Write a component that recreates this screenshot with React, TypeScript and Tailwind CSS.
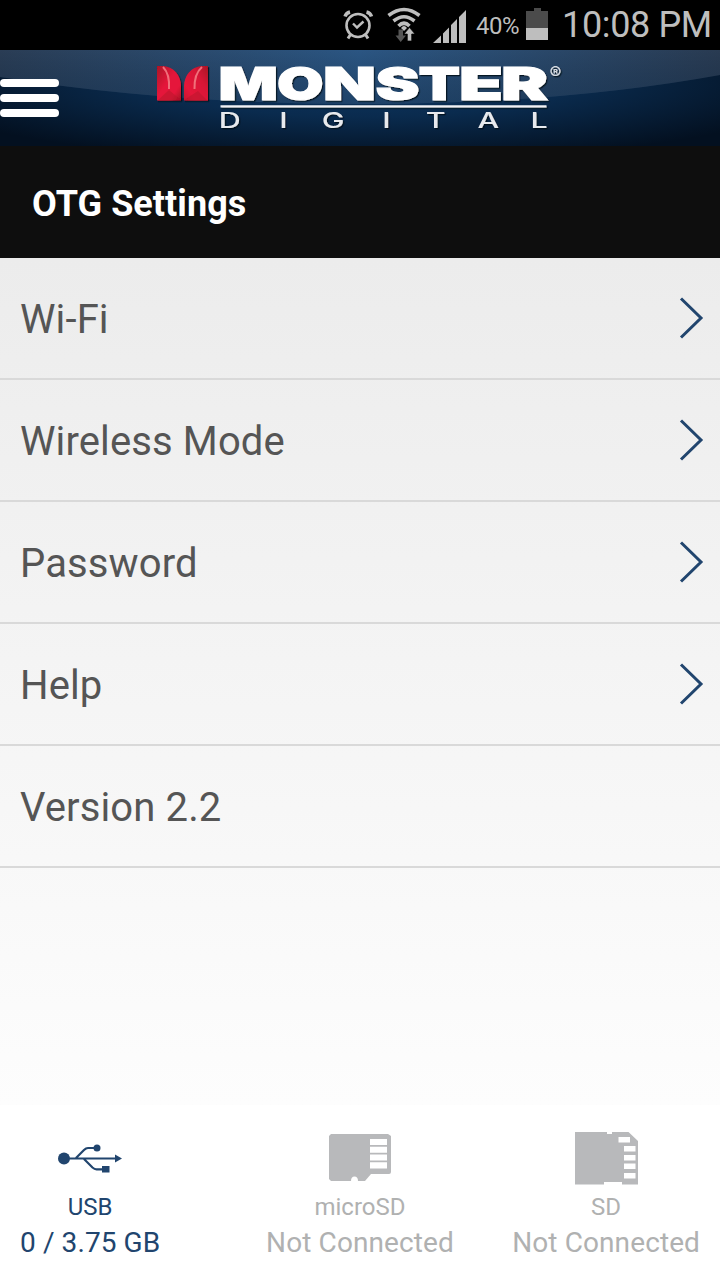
import type { ReactNode } from "react";

const menuItems = [
  { label: "Wi-Fi", hasDetail: true },
  { label: "Wireless Mode", hasDetail: true },
  { label: "Password", hasDetail: true },
  { label: "Help", hasDetail: true },
  { label: "Version 2.2", hasDetail: false },
];

// left edge and advance width of each letter in the wordmark
const wordmark = [
  { letter: "M", x: 218.5, width: 59.5 },
  { letter: "O", x: 277, width: 46.5 },
  { letter: "N", x: 323, width: 53 },
  { letter: "S", x: 375.5, width: 44 },
  { letter: "T", x: 418.5, width: 41.5 },
  { letter: "E", x: 459, width: 44 },
  { letter: "R", x: 501, width: 47 },
];

function StatusBar() {
  return (
    <div className="flex h-[50px] shrink-0 items-center justify-end bg-black pr-[9px] text-[#bebebe]">
      <svg width="130" height="50" viewBox="338 0 130 50" fill="none" stroke="#bebebe">
        {/* alarm */}
        <circle cx="358" cy="25.500" r="11.500" strokeWidth="2.600" />
        <path d="M353 23.500l4 4 6.500-6" strokeWidth="2.400" />
        <path d="M345 16.500q1-3.500 5-4.500M366.500 12q4 1 5 4.500" strokeWidth="3.400" />
        <path d="M350.500 34.500l-2.500 4M365.500 34.500l2.500 4" strokeWidth="3" />
        {/* wifi */}
        <path d="M388.500 15.500Q404 3.500 419.500 15.500M393.500 21Q404 12.500 414.500 21M398.500 26Q404 20.500 409.500 26" strokeWidth="3.600" />
        <path d="M401 28q3-4 6 0l-3 3z" fill="#bebebe" stroke="none" />
        <path d="M398.500 29.500h4.500v6h3l-5.300 6.500-5.200-6.500h3z" fill="#555" stroke="none" />
        <path d="M409.500 27.500l5.500 6.500h-3.300v7h-4.400v-7H404z" fill="#bebebe" stroke="#000" strokeWidth=".7" />
        {/* signal */}
        <path d="M433 43l8-7.500V43zM443 43V33.500l6-6V43zM451 43V25l6-6v24zM459 43V17l7-7v33z" fill="#bebebe" stroke="none" />
      </svg>
      <span className="mt-[2px] ml-2 w-[43px] text-[24px] leading-none tracking-[-0.5px]">40%</span>
      <svg className="ml-[7px]" width="22" height="50" viewBox="526 0 22 50">
        <path d="M526 11h8V8h7v3h7v17h-22z" fill="#4b4b4b" />
        <path d="M526 28h22v12h-22z" fill="#bebebe" />
      </svg>
      <span className="ml-[14px] w-[149px] text-[36px] leading-[50px] tracking-[-0.35px] whitespace-nowrap">10:08 PM</span>
    </div>
  );
}

function Logo() {
  return (
    <svg className="ml-[97px]" width="410" height="96" viewBox="156 50 410 96">
      <defs>
        <linearGradient id="red" x1="0" x2="1" y1="0" y2="1">
          <stop offset="0" stopColor="#a91126" />
          <stop offset=".45" stopColor="#e5173a" />
          <stop offset=".75" stopColor="#e5173a" />
          <stop offset="1" stopColor="#a51024" />
        </linearGradient>
        <linearGradient id="redFlipped" x1="1" x2="0" y1="0" y2="1">
          <stop offset="0" stopColor="#a91126" />
          <stop offset=".35" stopColor="#d81636" />
          <stop offset=".75" stopColor="#e5173a" />
          <stop offset="1" stopColor="#c51430" />
        </linearGradient>
        <filter id="shadow" x="-5%" y="-10%" width="110%" height="130%">
          <feDropShadow dx="1.200" dy="1.200" stdDeviation=".7" floodColor="#020a18" floodOpacity=".85" />
        </filter>
      </defs>
      <g filter="url(#shadow)">
        <path d="M157 66h7c9 1 17 9 17 20v14.500h-24z" fill="url(#red)" />
        <path d="M208 66h-7c-9 1-17 9-17 20v14.500h24z" fill="url(#redFlipped)" />
        <path d="M158 100l11-10 12 10zM207 100l-9-9-14 9z" fill="#b51029" opacity=".5" />
        <path d="M163 67q7 7 6 22" fill="none" stroke="#f0707a" strokeWidth="2" />
        <path d="M202 67q-8 7-7.500 22" fill="none" stroke="#f0707a" strokeWidth="2" />
        <text y="100.300" fill="#fff" stroke="#fff" strokeWidth="1.200" className="font-[Inter,sans-serif] text-[46px] font-black">
          {wordmark.map(({ letter, x, width }) => (
            <tspan key={letter} x={x} textLength={width} lengthAdjust="spacingAndGlyphs">
              {letter}
            </tspan>
          ))}
        </text>
        <path d="M220.500 105.200h326v2.300h-326z" fill="#f0f2f5" />
        <text
          transform="scale(1.450 1)"
          x="150.800 192.600 221.900 263.700 293.700 329.300 365.800"
          y="127.600"
          fill="#e8eaee"
          className="font-[Inter,sans-serif] text-[21px] font-medium"
        >
          DIGITAL
        </text>
        <text x="549.500" y="79" fill="#d5dae2" className="font-[Inter,sans-serif] text-[18px] font-bold">
          ®
        </text>
      </g>
    </svg>
  );
}

function Header() {
  return (
    <header className="relative flex h-24 shrink-0 overflow-hidden bg-[#07182c]">
      {/* glossy backdrop */}
      <svg className="absolute inset-0" width="720" height="96">
        <defs>
          <radialGradient id="base" gradientUnits="userSpaceOnUse" cx="0" cy="0" r="1" gradientTransform="translate(360 30) scale(470 82)">
            <stop offset="0" stopColor="#0e3763" />
            <stop offset=".45" stopColor="#0a2b4e" />
            <stop offset="1" stopColor="#031020" />
          </radialGradient>
          <linearGradient id="gloss">
            <stop offset="0" stopColor="#2a3d55" />
            <stop offset=".5" stopColor="#2b5683" />
            <stop offset="1" stopColor="#293b52" />
          </linearGradient>
          <linearGradient id="glossFade" x2="0" y2="1">
            <stop offset="0" stopColor="#071a30" stopOpacity="0" />
            <stop offset="1" stopColor="#0b2744" stopOpacity=".4" />
          </linearGradient>
        </defs>
        <path d="M0 0h720v96H0z" fill="url(#base)" />
        <path d="M0 0h720v25Q560 54 360 54 170 54 0 27z" fill="url(#gloss)" />
        <path d="M0 0h720v25Q560 54 360 54 170 54 0 27z" fill="url(#glossFade)" />
      </svg>
      <button aria-label="Menu" className="relative flex w-[59px] flex-col gap-[7px] pt-[29px]">
        <span className="h-2 w-full rounded-full bg-white" />
        <span className="h-2 w-full rounded-full bg-white" />
        <span className="h-2 w-full rounded-full bg-white" />
      </button>
      <div className="relative">
        <Logo />
      </div>
    </header>
  );
}

function Row({ label, hasDetail }: { label: string; hasDetail: boolean }) {
  return (
    <li className="flex h-[122px] items-center justify-between border-b-2 border-[#d9d9d9] pr-4 pl-5">
      <span className="mt-1 text-[40px] leading-none tracking-[0.12px] text-[#555]">{label}</span>
      {hasDetail && (
        <svg width="25" height="42" viewBox="0 0 25 42" fill="none" stroke="#21456e" strokeWidth="3">
          <path d="M2 1.500L22 21 2 40.500" />
        </svg>
      )}
    </li>
  );
}

function Storage({ name, status, className, children }: { name: string; status: string; className: string; children: ReactNode }) {
  return (
    <div className={`flex flex-col items-center ${className}`}>
      {children}
      <span className="mt-[6px] text-[24px] leading-[30px]">{name}</span>
      <span className="mt-[3px] text-[28px] leading-[36px] tracking-[0.1px] whitespace-nowrap">{status}</span>
    </div>
  );
}

function StorageBar() {
  return (
    <footer className="grid h-[175px] shrink-0 grid-cols-[1fr_auto_1fr] bg-white px-5 pt-[23px]">
      <Storage name="USB" status="0 / 3.75 GB" className="justify-self-start text-[#21456e]">
        <svg width="66" height="58" viewBox="57 1128 66 58" fill="none" stroke="#21456e" strokeWidth="2.200">
          <circle cx="64" cy="1158.500" r="6" fill="#21456e" stroke="none" />
          <circle cx="97" cy="1148" r="3.500" fill="#21456e" stroke="none" />
          <path d="M66 1158.500h52M76 1158l8-8q2-2 4-2h8M84 1159l8.500 8.500q2 1.800 4 1.800h6" />
          <path d="M115 1154.500l7 4-7 4zM102 1166h7.500v6.500H102z" fill="#21456e" stroke="none" />
        </svg>
      </Storage>
      <Storage name="microSD" status="Not Connected" className="text-[#b0b1b1]">
        <svg width="62" height="58" viewBox="329 1128 62 58" fill="#b8b9bb">
          <path d="M331 1134h57l3 2v36q0 2-2 2h-18l-6 7h-7q0-4.500-3.500-4.500t-3.500 4.500h-20l-2-2v-43z" />
          <path d="M370 1139h17v6h-17zM370 1146.800h17v6h-17zM370 1154.600h17v6h-17zM370 1162.300h17v6.200h-17z" fill="#fff" />
        </svg>
      </Storage>
      <Storage name="SD" status="Not Connected" className="justify-self-end text-[#b0b1b1]">
        <svg width="63" height="58" viewBox="574 1128 63 58" fill="#b8b9bb">
          <path d="M574 1132h32v2h5v-2h16.500l9.500 9v43.500h-16v-2.500h-18v2.500h-29z" />
          <path d="M617.500 1137h11.500v5.500h-11.500zM623 1146h11.500v5.500H623zM623 1155h11.500v5.500H623zM623 1163.500h11.500v5.500H623zM623 1173h11.500v5.500H623z" fill="#fff" />
        </svg>
      </Storage>
    </footer>
  );
}

export default function App() {
  return (
    <div className="flex h-[1280px] w-[720px] flex-col overflow-hidden bg-white font-[Roboto,sans-serif]">
      <StatusBar />
      <Header />
      <div className="flex h-28 shrink-0 items-center bg-[#0e0e0e] pl-8">
        <h1 className="mt-[3px] text-[36px] leading-none font-bold tracking-[0.05px] text-white">OTG Settings</h1>
      </div>
      <main className="grow bg-linear-to-b from-[#ececec] to-[#fdfdfd]">
        <ul>
          {menuItems.map((item) => (
            <Row key={item.label} {...item} />
          ))}
        </ul>
      </main>
      <StorageBar />
    </div>
  );
}
